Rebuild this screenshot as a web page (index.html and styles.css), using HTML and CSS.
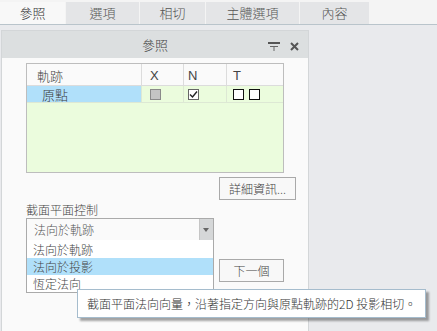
FILE: index.html
```html
<!DOCTYPE html>
<html lang="zh-Hant">
<head>
    <meta charset="UTF-8">
    <title>參照</title>
    <link rel="stylesheet" href="styles.css">
</head>
<body>
    <!-- Tab strip -->
    <div class="tabs">
        <div class="tab tab-ref active">參照</div>
        <div class="tab tab-opt">選項</div>
        <div class="tab tab-tan">相切</div>
        <div class="tab tab-body">主體選項</div>
        <div class="tab tab-prop">內容</div>
    </div>

    <div class="panel">
        <div class="panel-header">
            <span class="panel-title">參照</span>
            <span class="panel-icons">
                <svg width="12" height="10" viewBox="0 0 12 10">
                    <rect x="0" y="1" width="12" height="2" fill="#555"/>
                    <path d="M2 5.5H10M6 5.5V10" stroke="#666" stroke-width="1" fill="none"/>
                </svg>
                <svg width="9" height="9" viewBox="0 0 9 9">
                    <path d="M1 1L8 8M8 1L1 8" stroke="#555" stroke-width="2" fill="none"/>
                </svg>
            </span>
        </div>

        <div class="panel-body">
            <div class="ref-table">
                <div class="row head">
                    <div class="cell c1">軌跡</div>
                    <div class="cell c2">X</div>
                    <div class="cell c3">N</div>
                    <div class="cell c4">T</div>
                </div>
                <div class="row data">
                    <div class="cell c1 selected">原點</div>
                    <div class="cell c2"><span class="box gray"></span></div>
                    <div class="cell c3">
                        <span class="box checked">
                            <svg width="9" height="9" viewBox="0 0 9 9"><path d="M1 4.5L3.5 7L8 1.5" stroke="#222" stroke-width="1.4" fill="none"/></svg>
                        </span>
                    </div>
                    <div class="cell c4"><span class="box dark"></span><span class="box dark"></span></div>
                </div>
            </div>

            <div class="detail-row">
                <button class="btn detail-btn">詳細資訊...</button>
            </div>

            <div class="ctrl-label">截面平面控制</div>

            <div class="ctrl-row">
                <div class="select-wrap">
                    <div class="select">
                        <span class="select-text">法向於軌跡</span>
                        <span class="select-arrow"></span>
                    </div>
                    <ul class="dropdown">
                        <li>法向於軌跡</li>
                        <li class="hl">法向於投影</li>
                        <li>恆定法向</li>
                    </ul>
                </div>
                <button class="btn next-btn">下一個</button>
            </div>
        </div>
    </div>

    <div class="tooltip">截面平面法向向量，沿著指定方向與原點軌跡的2D 投影相切。</div>
</body>
</html>
```

FILE: styles.css
```css
/* General Reset */
* {
    margin: 0;
    padding: 0;
    box-sizing: border-box;
}

body {
    font-family: "Noto Sans CJK TC", "Noto Sans", sans-serif;
    font-weight: 300;
    font-size: 12px;
    color: #3a3a3a;
    background-color: #e9eaed;
    height: 331px;
    overflow: hidden;
    position: relative;
}

/* Tabs */
.tabs {
    display: flex;
    height: 25px;
    padding-top: 2px;
    background-color: #f4f4f4;
    border-bottom: 1px solid #b9c4cb;
}

.tab {
    background-color: #e4e5e7;
    border-right: 1px solid #f4f4f4;
    text-align: center;
    line-height: 21px;
    font-size: 13px;
    color: #555;
}

.tab.active {
    background-color: #f8f8f8;
    color: #333;
}

.tab-ref { width: 66px; }
.tab-opt { width: 74px; }
.tab-tan { width: 66px; }
.tab-body { width: 94px; }
.tab-prop { width: 70px; }

/* Panel */
.panel {
    margin: 5px 0 0 1px;
    width: 308px;
    height: 301px;
    background-color: #fafafa;
    border: 1px solid #d3d6d8;
    border-bottom: none;
}

.panel-header {
    height: 27px;
    background-color: #dcdfe0;
    display: flex;
    align-items: center;
    position: relative;
}

.panel-title {
    flex: 1;
    text-align: center;
    font-size: 13px;
    color: #444;
}

.panel-icons {
    position: absolute;
    right: 9px;
    top: 10px;
    display: flex;
    gap: 10px;
    align-items: center;
}

.panel-body {
    padding: 5px 0 0 24px;
}

/* Reference table */
.ref-table {
    width: 258px;
    height: 110px;
    border: 1px solid #bdbdbd;
    background-color: #ebfcdd;
}

.row {
    display: flex;
}

.row.head {
    height: 22px;
    background-color: #fafafa;
    border-bottom: 1px solid #dcdcdc;
}

.row.data {
    height: 17px;
    border-bottom: 1px solid #dde8d4;
}

.cell {
    display: flex;
    align-items: center;
    border-right: 1px solid #dcdcdc;
    font-size: 13px;
}

.head .cell {
    font-family: "Liberation Sans", "Noto Sans CJK TC", sans-serif;
    font-weight: 400;
    color: #444;
    padding-top: 1px;
}

.head .c1 {
    font-family: "Noto Sans CJK TC", sans-serif;
    font-weight: 300;
}

.data .cell {
    border-right-color: #dde8d4;
}

.c1 { width: 115px; padding-left: 10px; }
.c2 { width: 42px; padding-left: 8px; }
.c3 { width: 43px; padding-left: 4px; }
.c4 { width: 56px; padding-left: 6px; border-right: none !important; gap: 5px; }

.cell.selected {
    background-color: #b0e0fa;
    padding-left: 15px;
}

.box {
    display: inline-flex;
    align-items: center;
    justify-content: center;
    width: 11px;
    height: 11px;
    border: 1px solid #222;
}

.box.gray {
    background-color: #c4c4c4;
    border-color: #8a8a8a;
}

.box.checked {
    background-color: #fff;
    border-color: #666;
}

.box.dark {
    background-color: #fff;
    border-color: #111;
}

/* Buttons */
.btn {
    font-family: "Noto Sans CJK TC", sans-serif;
    font-weight: 300;
    font-size: 12px;
    color: #444;
    background-color: #f8f8f8;
    border: 1px solid #a9a9a9;
    height: 23px;
}

.detail-row {
    display: flex;
    margin-top: 4px;
    padding-left: 193px;
}

.detail-btn {
    width: 77px;
}

.ctrl-label {
    margin-top: 2px;
    height: 16px;
    line-height: 16px;
    color: #444;
}

/* Select control */
.ctrl-row {
    display: flex;
    gap: 5px;
    align-items: flex-start;
}

.select-wrap {
    position: relative;
    width: 188px;
}

.select {
    height: 23px;
    border: 1px solid #aaa;
    background-color: #fafafa;
    display: flex;
}

.select-text {
    flex: 1;
    padding-left: 7px;
    line-height: 21px;
    color: #555;
}

.select-arrow {
    width: 14px;
    background-color: #d5d7d8;
    border-left: 1px solid #c5c5c5;
    position: relative;
}

.select-arrow::after {
    content: "";
    position: absolute;
    left: 3px;
    top: 9px;
    border-left: 3.5px solid transparent;
    border-right: 3.5px solid transparent;
    border-top: 4px solid #666;
}

.dropdown {
    position: absolute;
    top: 22px;
    left: 0;
    width: 188px;
    list-style: none;
    background-color: #fff;
    border: 1px solid #aaa;
    border-top: none;
    padding-top: 1px;
}

.dropdown li {
    height: 17px;
    line-height: 17px;
    padding-left: 6px;
    color: #444;
}

.dropdown li.hl {
    background-color: #b0e0fa;
}

.next-btn {
    width: 65px;
    margin-top: 41px;
}

/* Tooltip */
.tooltip {
    position: absolute;
    left: 77px;
    top: 289px;
    width: 349px;
    height: 29px;
    line-height: 27px;
    padding-left: 9px;
    background-color: #fff;
    border: 1px solid #a5bccd;
    box-shadow: 3px 3px 2px rgba(0, 0, 0, 0.35);
    color: #333;
}
```
